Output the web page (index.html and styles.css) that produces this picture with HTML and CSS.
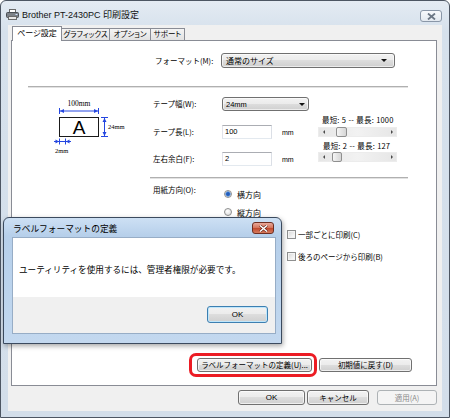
FILE: index.html
```html
<!DOCTYPE html>
<html lang="ja">
<head>
<meta charset="utf-8">
<title>Brother PT-2430PC 印刷設定</title>
<link rel="stylesheet" href="styles.css">
</head>
<body>
<div class="window">
  <div class="titlebar">
    <svg class="app-icon" width="13" height="11" viewBox="0 0 13 11">
      <rect x="3.5" y="0.5" width="6" height="4" fill="#fff" stroke="#6a6a6a"/>
      <rect x="0.5" y="3.5" width="12" height="5" rx="1" fill="#7d8288" stroke="#4a4f55"/>
      <rect x="2.5" y="7.5" width="8" height="3" fill="#e8e8e8" stroke="#6a6a6a"/>
      <rect x="9.5" y="5" width="2" height="1" fill="#cfe3ff"/>
    </svg>
    <span class="title">Brother PT-2430PC 印刷設定</span>
    <div class="close-btn">
      <svg width="9" height="7" viewBox="0 0 9 7"><path d="M1 0.5 L8 6.5 M8 0.5 L1 6.5" stroke="#6c7785" stroke-width="1.8"/></svg>
    </div>
  </div>
  <div class="client">
    <div class="tabs">
      <div class="tab selected">ページ設定</div>
      <div class="tab tab-graphics">グラフィックス</div>
      <div class="tab tab-option">オプション</div>
      <div class="tab tab-support">サポート</div>
    </div>
    <div class="panel">
      <div class="format-row">
        <span class="label label-format">フォーマット(M):</span>
        <div class="combo combo-format"><span>通常のサイズ</span><span class="arrow"></span></div>
      </div>
      <div class="sep sep-full"></div>
      <div class="media">
        <div class="diagram">
          <svg width="82" height="60" viewBox="0 0 82 60">
            <text x="29" y="10" text-anchor="middle" class="dim-text">100mm</text>
            <g stroke="#2446e0" stroke-width="1" fill="none">
              <line x1="9.5" y1="12" x2="9.5" y2="18"/>
              <line x1="48.5" y1="12" x2="48.5" y2="18"/>
              <line x1="9.5" y1="15" x2="48.5" y2="15"/>
              <line x1="51" y1="21.5" x2="58" y2="21.5"/>
              <line x1="51" y1="40.5" x2="58" y2="40.5"/>
              <line x1="54.5" y1="21.5" x2="54.5" y2="40.5"/>
              <line x1="9.5" y1="42.5" x2="9.5" y2="48.5"/>
              <line x1="15.5" y1="42.5" x2="15.5" y2="48.5"/>
              <line x1="4" y1="45.5" x2="21" y2="45.5"/>
            </g>
            <g fill="#2446e0">
              <polygon points="10,15 14,13 14,17"/>
              <polygon points="48,15 44,13 44,17"/>
              <polygon points="54.5,22 52.5,26 56.5,26"/>
              <polygon points="54.5,40 52.5,36 56.5,36"/>
              <polygon points="9,45.5 5.5,43.5 5.5,47.5"/>
              <polygon points="16,45.5 19.5,43.5 19.5,47.5"/>
            </g>
            <rect x="9.5" y="21.5" width="39" height="19" fill="#fff" stroke="#1a1a1a"/>
            <text x="29" y="38" text-anchor="middle" class="big-a">A</text>
            <text x="58" y="33" class="dim-text-sm">24mm</text>
            <text x="5" y="57" class="dim-text-sm">2mm</text>
          </svg>
        </div>
        <div class="fields">
          <div class="field field-1">
            <span class="label label-field">テープ幅(W):</span>
            <div class="combo combo-width"><span>24mm</span><span class="arrow"></span></div>
          </div>
          <div class="field field-2">
            <span class="label label-field">テープ長(L):</span>
            <div class="input">100</div>
            <span class="unit">mm</span>
          </div>
          <div class="field field-3">
            <span class="label label-field">左右余白(F):</span>
            <div class="input">2</div>
            <span class="unit">mm</span>
          </div>
        </div>
        <div class="ranges">
          <div class="range range-1">
            <div class="range-label">最短: 5 -- 最長: 1000</div>
            <div class="scroll">
              <span class="sarrow sarrow-left"></span>
              <div class="strack"><span class="thumb" style="margin-left:8px;width:11px"></span></div>
              <span class="sarrow sarrow-right"></span>
            </div>
          </div>
          <div class="range range-2">
            <div class="range-label range-label-2">最短: 2 -- 最長: 127</div>
            <div class="scroll">
              <span class="sarrow sarrow-left"></span>
              <div class="strack"><span class="thumb" style="margin-left:4px;width:10px"></span></div>
              <span class="sarrow sarrow-right"></span>
            </div>
          </div>
        </div>
      </div>
      <div class="sep sep-right"></div>
      <div class="orient">
        <span class="label label-orient">用紙方向(O):</span>
        <div class="radios">
          <div class="radio-item"><span class="radio checked"></span><span>横方向</span></div>
          <div class="radio-item"><span class="radio"></span><span>縦方向</span></div>
        </div>
      </div>
      <div class="checks">
        <div class="check-item"><span class="checkbox"></span><span>一部ごとに印刷(C)</span></div>
        <div class="check-item"><span class="checkbox"></span><span>後ろのページから印刷(B)</span></div>
      </div>
      <div class="panel-buttons">
        <div class="highlight-wrap">
          <button class="btn btn-define">ラベルフォーマットの定義(U)...</button>
          <span class="highlight-ring"></span>
        </div>
        <button class="btn btn-reset">初期値に戻す(D)</button>
      </div>
    </div>
    <div class="dialog-buttons">
      <button class="btn btn-ok">OK</button>
      <button class="btn btn-cancel">キャンセル</button>
      <button class="btn btn-apply" disabled>適用(A)</button>
    </div>
  </div>

  <div class="dialog">
    <div class="dialog-title">
      <span class="dialog-title-text">ラベルフォーマットの定義</span>
      <div class="dialog-close">
        <svg width="9" height="7" viewBox="0 0 9 7"><path d="M1 0.5 L8 6.5 M8 0.5 L1 6.5" stroke="#5a1d14" stroke-width="2.6"/><path d="M1 0.5 L8 6.5 M8 0.5 L1 6.5" stroke="#fff" stroke-width="1.5"/></svg>
      </div>
    </div>
    <div class="dialog-client">
      <div class="message">ユーティリティを使用するには、管理者権限が必要です。</div>
      <div class="dialog-footer">
        <button class="btn btn-dlg-ok">OK</button>
      </div>
    </div>
  </div>
</div>
</body>
</html>
```

FILE: styles.css
```css
* { box-sizing: border-box; }
html, body { margin: 0; padding: 0; }
body {
  width: 450px;
  height: 418px;
  overflow: hidden;
  background: #fff;
  font-family: "Noto Sans CJK JP", "Liberation Sans", sans-serif;
  font-size: 8px;
  color: #000;
}

.window {
  position: relative;
  width: 450px;
  height: 418px;
  border: 1px solid #4d5663;
  border-radius: 6px 6px 0 0;
  background: linear-gradient(to bottom, #e4ebf3 0, #d6e1ec 30px, #d3deea 100%);
  padding: 0 7px 6px 7px;
  display: flex;
  flex-direction: column;
}

.titlebar {
  height: 24px;
  display: flex;
  align-items: center;
  padding-top: 2px;
}
.app-icon { margin-left: -2px; margin-right: 3px; flex: none; }
.title {
  font-family: "Liberation Sans", "Noto Sans CJK JP", sans-serif;
  font-size: 9px;
  color: #111;
}
.close-btn {
  margin-left: auto;
  align-self: flex-start;
  margin-top: 7px;
  width: 22px;
  height: 12px;
  border: 1px solid #8a97a8;
  border-radius: 3px;
  background: linear-gradient(#f7f9fc, #e3e9f0);
  display: flex;
  align-items: center;
  justify-content: center;
}

.client {
  flex: 1;
  background: #f0f0f0;
  padding: 1px 5px 0 3px;
  display: flex;
  flex-direction: column;
}

.tabs {
  height: 14px;
  display: flex;
  align-items: flex-end;
  padding-left: 1px;
  position: relative;
  z-index: 2;
}
.tab {
  height: 12px;
  border: 1px solid #898c95;
  border-bottom: none;
  background: linear-gradient(#f4f4f4, #e2e2e2);
  font-size: 7.5px;
  line-height: 10px;
  text-align: center;
  white-space: nowrap;
  font-feature-settings: "palt";
  margin-left: -1px;
  overflow: hidden;
}
.tab.selected {
  width: 50px;
  height: 15px;
  margin-left: 0;
  margin-bottom: -1px;
  background: #fff;
  position: relative;
  z-index: 3;
  line-height: 12px;
  font-size: 8px;
}
.tab-graphics { width: 49px; }
.tab-option { width: 42px; }
.tab-support { width: 35px; }

.panel {
  height: 346px;
  border: 1px solid #898c95;
  background: #fff;
  display: flex;
  flex-direction: column;
  position: relative;
  z-index: 1;
}

.label { white-space: nowrap; font-size: 8px; line-height: 10px; }

.format-row {
  margin-top: 12px;
  height: 15px;
  display: flex;
  align-items: center;
  padding-left: 143px;
}
.label-format { width: 66px; font-size: 7.5px; }

.combo {
  height: 15px;
  border: 1px solid #707070;
  border-radius: 3px;
  background: linear-gradient(#f2f2f2 0%, #ebebeb 50%, #dddddd 50%, #cfcfcf 100%);
  box-shadow: inset 0 0 0 1px rgba(255,255,255,0.6);
  display: flex;
  align-items: center;
  justify-content: space-between;
  padding: 0 7px 0 4px;
  font-size: 8px;
}
.combo .arrow {
  width: 0;
  height: 0;
  border-left: 3px solid transparent;
  border-right: 3px solid transparent;
  border-top: 3px solid #111;
}
.combo-format { width: 174px; }
.combo-width { width: 87px; height: 14px; padding: 0 3px 0 3px; font-family: "Liberation Sans", sans-serif; font-size: 7.5px; }

.sep {
  height: 2px;
  border-top: 1px solid #b0b0b0;
  border-bottom: 1px solid #e2e2e2;
}
.sep-full { margin: 18px 0 0 16px; width: 380px; }
.sep-right { margin-left: 138px; width: 258px; }

.media {
  height: 89px;
  display: flex;
}
.diagram {
  width: 141px;
  flex: none;
  padding: 8px 0 0 38px;
}
.diagram svg { display: block; }
.dim-text { font-family: "Liberation Serif", serif; font-size: 7.5px; fill: #000; }
.dim-text-sm { font-family: "Liberation Serif", serif; font-size: 6.5px; fill: #000; }
.big-a { font-family: "Liberation Sans", sans-serif; font-size: 19px; fill: #000; }

.fields {
  width: 165px;
  flex: none;
  padding-top: 9px;
}
.field {
  height: 14px;
  display: flex;
  align-items: center;
}
.field-2 { margin-top: 14px; }
.field-3 { margin-top: 13px; }
.label-field { width: 69px; font-size: 7.5px; }
.input {
  width: 50px;
  height: 14px;
  border: 1px solid #abadb3;
  border-color: #abadb3 #dbdfe6 #e3e9ef #e2e3ea;
  background: #fff;
  padding-left: 2px;
  font-family: "Liberation Sans", sans-serif;
  font-size: 7.5px;
  line-height: 12px;
}
.unit {
  margin-left: 10px;
  font-family: "Liberation Sans", sans-serif;
  font-size: 7px;
}

.ranges {
  padding-top: 27px;
  width: 84px;
  flex: none;
}
.range-label {
  height: 10px;
  line-height: 10px;
  padding-left: 4px;
  font-size: 7.5px;
  white-space: nowrap;
  letter-spacing: 0.15px;
  word-spacing: 0.5px;
}
.range-label-2 { padding-left: 5px; }
.range-1 .scroll { margin-top: 2px; }
.range-2 { margin-top: 4px; }
.range-2 .scroll { margin-top: 1px; }
.scroll {
  width: 79px;
  height: 10px;
  display: flex;
  background: linear-gradient(to right, #e6e6e6, #f2f2f2 50%, #e6e6e6);
  border: 1px solid #ececec;
}
.sarrow {
  width: 9px;
  flex: none;
  display: flex;
  align-items: center;
  justify-content: center;
}
.sarrow::before {
  content: "";
  width: 0;
  height: 0;
  border-top: 2px solid transparent;
  border-bottom: 2px solid transparent;
}
.sarrow-left::before { border-right: 2px solid #4a4a4a; }
.sarrow-right::before { border-left: 2px solid #4a4a4a; }
.strack { flex: 1; display: flex; }
.thumb {
  height: 10px;
  margin-top: -1px;
  border: 1px solid #8f8f8f;
  border-radius: 2px;
  background: linear-gradient(to right, #f6f6f6, #e4e4e4 50%, #d6d6d6);
}

.orient {
  margin-top: 6px;
  display: flex;
  padding-left: 141px;
}
.label-orient { width: 71px; font-size: 7.5px; }
.radios { padding-top: 4px; }
.radio-item {
  height: 10px;
  display: flex;
  align-items: center;
  font-size: 8px;
}
.radio-item + .radio-item { margin-top: 8px; }
.radio {
  width: 8px;
  height: 8px;
  border-radius: 50%;
  border: 1px solid #8e8f8f;
  background: radial-gradient(circle at 40% 35%, #ffffff, #d8d8d8);
  margin-right: 5px;
  flex: none;
}
.radio.checked {
  background: radial-gradient(circle at 50% 50%, #1f4fa8 0, #2d6bc8 1.6px, #8fb7e8 2.6px, #e4e4e4 3px, #f4f4f4 100%);
}

.checks {
  margin-top: 12px;
  margin-left: 275px;
}
.check-item {
  height: 10px;
  display: flex;
  align-items: center;
  font-size: 7.5px;
  white-space: nowrap;
}
.check-item + .check-item { margin-top: 12px; }
.checkbox {
  width: 9px;
  height: 9px;
  border: 1px solid #8e8f8f;
  background: linear-gradient(135deg, #d6d6d6, #f4f4f4 70%, #fff);
  box-shadow: inset 0 0 0 1px #f4f4f4;
  margin-right: 2px;
  flex: none;
}

.btn {
  font-family: "Noto Sans CJK JP", "Liberation Sans", sans-serif;
  font-size: 7.5px;
  color: #000;
  height: 14px;
  border: 1px solid #707070;
  border-radius: 3px;
  background: linear-gradient(#f2f2f2 0%, #ebebeb 50%, #dddddd 50%, #cfcfcf 100%);
  box-shadow: inset 0 0 0 1px rgba(255,255,255,0.65);
  padding: 0;
  display: flex;
  align-items: center;
  justify-content: center;
  line-height: 1;
  white-space: nowrap;
}

.panel-buttons {
  margin-top: auto;
  margin-bottom: 13px;
  display: flex;
  justify-content: flex-end;
  padding-right: 24px;
  gap: 7px;
}
.highlight-wrap { position: relative; display: flex; }
.btn-define { width: 115px; }
.btn-reset { width: 93px; }
.highlight-ring {
  position: absolute;
  top: -5px;
  left: -8px;
  right: -5px;
  bottom: -5px;
  border: 3px solid #ec1c24;
  border-radius: 7px;
}

.dialog-buttons {
  height: 25px;
  padding-top: 4px;
  display: flex;
  justify-content: flex-end;
}
.dialog-buttons .btn { height: 15px; }
.btn-ok { width: 67px; font-family: "Liberation Sans", sans-serif; font-size: 8px; }
.btn-cancel { width: 62px; margin-left: 2px; }
.btn-apply {
  width: 60px;
  margin-left: 8px;
  color: #8a8a8a;
  border-color: #adb2b5;
  background: #f4f4f4;
  box-shadow: none;
}

.dialog {
  position: absolute;
  left: 2px;
  top: 216px;
  width: 279px;
  height: 127px;
  border: 1px solid #3b4a5e;
  border-radius: 6px 6px 0 0;
  background: linear-gradient(to bottom, #cde0f4 0, #b6cfea 18px, #bcd4ed 60%, #c3d8ef 100%);
  padding: 0 5px 9px 8px;
  display: flex;
  flex-direction: column;
  z-index: 10;
  box-shadow: 1px 2px 5px rgba(0,0,0,0.35);
}
.dialog-title {
  height: 19px;
  display: flex;
}
.dialog-title-text {
  padding: 5px 0 0 1px;
  font-size: 8.7px;
  line-height: 12px;
  white-space: nowrap;
}
.dialog-close {
  margin-left: auto;
  margin-right: 2px;
  margin-top: 4px;
  width: 22px;
  height: 12px;
  border: 1px solid #6e2e22;
  border-radius: 3px;
  background: linear-gradient(#e9a99b 0%, #d5775f 45%, #c24b30 55%, #d47a5c 100%);
  display: flex;
  align-items: center;
  justify-content: center;
}
.dialog-client {
  flex: 1;
  border: 1px solid #97adc6;
  background: #fff;
  display: flex;
  flex-direction: column;
}
.message {
  height: 59px;
  display: flex;
  align-items: center;
  padding: 2px 0 0 6px;
  font-size: 8.6px;
  white-space: nowrap;
}
.dialog-footer {
  flex: 1;
  background: #f0f0f0;
  display: flex;
  justify-content: flex-end;
  align-items: flex-start;
  padding: 9px 7px 0 0;
}
.btn-dlg-ok {
  width: 61px;
  height: 17px;
  border-color: #3c7fb1;
  box-shadow: inset 0 0 0 1px #bfe6fb;
  font-family: "Liberation Sans", sans-serif;
  font-size: 8px;
}
```
